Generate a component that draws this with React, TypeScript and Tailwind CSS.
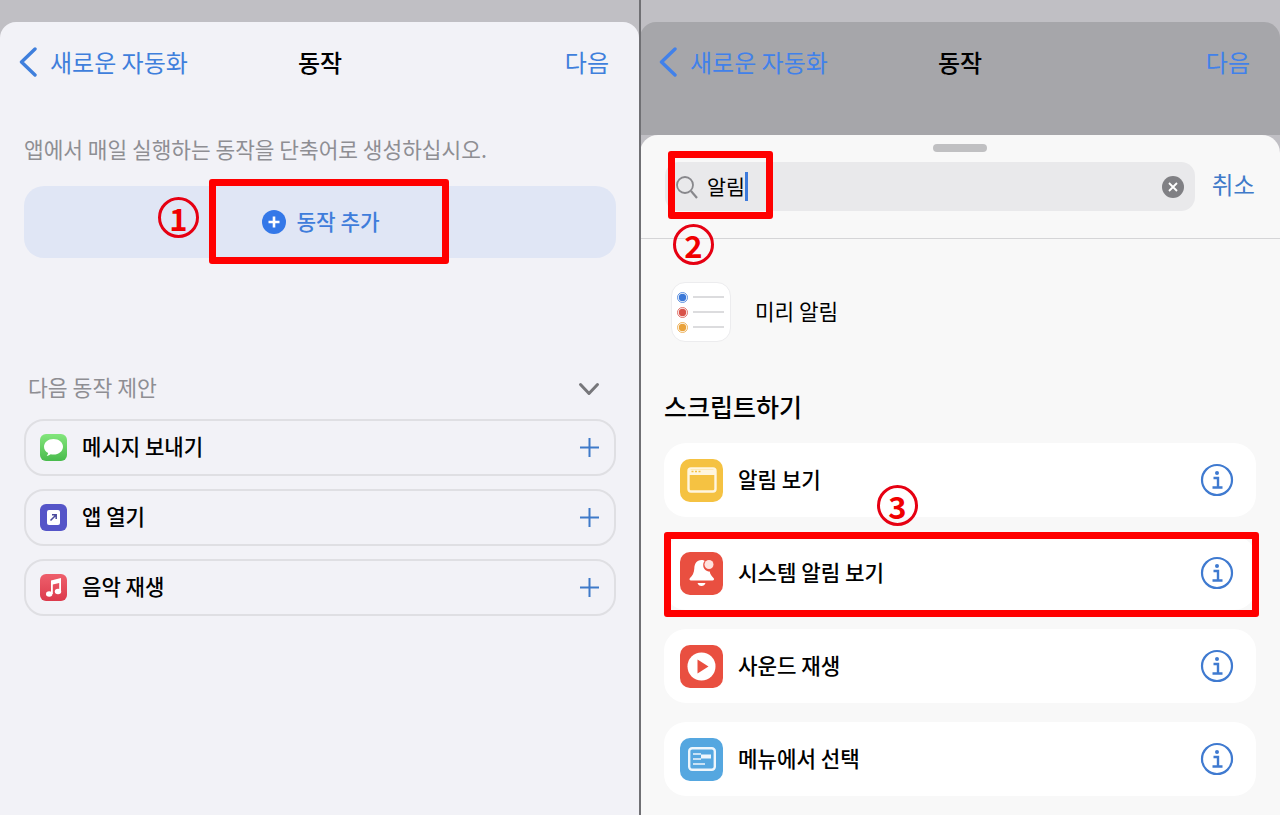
const font = { fontFamily: '"Noto Sans CJK KR", "Noto Sans", sans-serif' }

function Back({ color = '#3f7ddb' }: { color?: string }) {
  return (
    <svg width="18" height="30" viewBox="0 0 18 30" fill="none">
      <path d="M16 2 2.500 15 16 28" stroke={color} strokeWidth="3.400" strokeLinecap="round" strokeLinejoin="round" />
    </svg>
  )
}

function NavBar({ blue }: { blue: string }) {
  return (
    <div className="relative flex h-[80px] items-center justify-between pr-[30px] pl-[19px]">
      <div className="flex items-center gap-[13px]">
        <Back color={blue} />
        <span className="text-[24px] leading-8" style={{ color: blue }}>새로운 자동화</span>
      </div>
      <span className="absolute left-[298px] text-[24px] leading-8 font-medium text-black">동작</span>
      <span className="text-[24px] leading-8" style={{ color: blue }}>다음</span>
    </div>
  )
}

function AppIcon({ children, className }: { children: React.ReactNode; className: string }) {
  return <div className={`flex h-[27px] w-[27px] items-center justify-center rounded-[6px] ${className}`}>{children}</div>
}

function Suggestion({ icon, label }: { icon: React.ReactNode; label: string }) {
  return (
    <div className="flex h-[57px] items-center rounded-[20px] border-2 border-[#dfdfe3] pr-[15px] pl-[14px]">
      {icon}
      <span className="ml-[15px] flex-1 pb-1 text-[21.100px] leading-7 font-medium text-black">{label}</span>
      <svg width="19" height="19" viewBox="0 0 19 19" stroke="#3f7ac9" strokeWidth="2"><path d="M9.500 0v19M0 9.500h19" /></svg>
    </div>
  )
}

function Info() {
  return (
    <svg width="34" height="34" viewBox="0 0 34 34" fill="none">
      <circle cx="17" cy="17" r="15" stroke="#3f7ad0" strokeWidth="2.200" />
      <circle cx="17" cy="10" r="2" fill="#3f7ad0" />
      <path d="M13.500 15H18v9M12.500 24.500h10" stroke="#3f7ad0" strokeWidth="2.400" />
    </svg>
  )
}

function ActionRow({ icon, label, className }: { icon: React.ReactNode; label: string; className: string }) {
  return (
    <div className="flex h-[74px] items-center rounded-[22px] bg-white pr-[22px] pl-4">
      <div className={`flex h-[43px] w-[43px] items-center justify-center rounded-[10px] ${className}`}>{icon}</div>
      <span className="ml-[15px] flex-1 pb-[2px] text-[21.200px] leading-7 font-medium text-black">{label}</span>
      <Info />
    </div>
  )
}

function RedBox({ className }: { className: string }) {
  return <div className={`absolute rounded-[3px] border-[7px] border-[#ff0000] ${className}`} />
}

function Mark({ children, className }: { children: string; className: string }) {
  return (
    <div className={`absolute flex h-[41px] w-[41px] items-center justify-center rounded-full border-[3px] border-[#e60012] text-[31px] leading-none font-bold text-[#f00000] ${className}`}>
      {children}
    </div>
  )
}

export default function App() {
  return (
    <div className="relative flex h-[815px] w-[1280px] overflow-hidden bg-[#c0bfc4]" style={font}>
      {/* left phone */}
      <div className="w-[639px] pt-[22px]">
        <div className="h-[793px] rounded-t-[16px] bg-[#f2f2f7]">
          <NavBar blue="#3f7fdc" />
          <div className="pr-[23px] pl-6">
            <p className="mt-[33px] text-[21.400px] leading-7 text-[#8e8e93]">앱에서 매일 실행하는 동작을 단축어로 생성하십시오.</p>
            <div className="mt-[23px] flex h-[72px] items-center justify-center gap-[10px] rounded-[20px] bg-[#e0e6f5] pl-[2px]">
              <svg width="24" height="24" viewBox="0 0 24 24">
                <circle cx="12" cy="12" r="12" fill="#3478e8" />
                <path d="M12 6.500v11M6.500 12h11" stroke="#fff" strokeWidth="2.600" />
              </svg>
              <span className="pb-[3px] text-[21.300px] leading-7 font-medium text-[#3f7ddb]">동작 추가</span>
            </div>
            <div className="mt-[114px] flex h-[30px] items-center justify-between pr-[16px] pl-1">
              <span className="text-[21.600px] leading-7 text-[#8e8e93]">다음 동작 제안</span>
              <svg className="mt-1" width="22" height="14" viewBox="0 0 22 14" fill="none">
                <path d="M2.500 2.500l8.500 9 8.500-9" stroke="#77777b" strokeWidth="3" strokeLinecap="round" strokeLinejoin="round" />
              </svg>
            </div>
            <div className="mt-[17px] flex flex-col gap-[13px]">
              <Suggestion
                label="메시지 보내기"
                icon={
                  <AppIcon className="bg-gradient-to-b from-[#83e67c] to-[#48bb4c]">
                    <svg width="21" height="20" viewBox="0 0 21 20">
                      <path d="M10.500 1C5.200 1 1 4.400 1 8.700c0 2.700 1.700 5 4.200 6.400-.2 1-.8 1.900-1.500 2.600 1.600 0 3-.6 4-1.500.9.2 1.800.3 2.800.3 5.300 0 9.500-3.400 9.500-7.800S15.800 1 10.500 1z" fill="#fff" />
                    </svg>
                  </AppIcon>
                }
              />
              <Suggestion
                label="앱 열기"
                icon={
                  <AppIcon className="bg-[#5555c8]">
                    <div className="flex h-[15px] w-[13px] items-center justify-center rounded-[2px] bg-white">
                      <svg width="9" height="9" viewBox="0 0 9 9" fill="none" stroke="#4a4a9c" strokeWidth="1.500"><path d="M1.500 7.500 7 2M3 1.800h4.200V6" /></svg>
                    </div>
                  </AppIcon>
                }
              />
              <Suggestion
                label="음악 재생"
                icon={
                  <AppIcon className="bg-gradient-to-b from-[#ee5f6c] to-[#dc3a4c]">
                    <svg width="18" height="21" viewBox="0 0 18 21" fill="#fff">
                      <path d="M6 3.500 16 1v13.500h-1.800V6L7.800 7.500V17H6z" />
                      <ellipse cx="4.200" cy="17" rx="3.200" ry="2.800" />
                      <ellipse cx="13" cy="14.500" rx="3.200" ry="2.800" />
                    </svg>
                  </AppIcon>
                }
              />
            </div>
          </div>
        </div>
      </div>

      <div className="relative z-10 -mr-px w-[2px] bg-[#707074]" />

      {/* right phone */}
      <div className="flex w-[640px] flex-col pt-[22px]">
        <div className="h-[113px] rounded-t-[16px] bg-[#a6a6aa]">
          <NavBar blue="#4181ea" />
        </div>
        <div className="flex-1 rounded-t-[18px] bg-[#f8f8f8]">
          <div className="mx-auto mt-[9px] h-2 w-[54px] rounded-full bg-[#c0c0c2]" />
          <div className="flex items-center pr-[25px] pl-[25px] pt-[10px]">
            <div className="flex h-[49px] w-[530px] items-center rounded-[14px] bg-[#e9e9eb] pr-[11px] pl-[10px]">
              <svg width="24" height="24" viewBox="0 0 24 24" fill="none" stroke="#88888c" strokeWidth="1.800">
                <circle cx="10" cy="10" r="8" />
                <path d="m16 16 6 7" strokeWidth="2.200" />
              </svg>
              <span className="ml-[8px] pb-[2px] text-[20.600px] leading-7 text-black">알림</span>
              <div className="h-[29px] w-[3px] bg-[#3d7bdc]" />
              <div className="flex-1" />
              <div className="flex h-[22px] w-[22px] items-center justify-center rounded-full bg-[#808084]">
                <svg width="10" height="10" viewBox="0 0 10 10" stroke="#fff" strokeWidth="1.800"><path d="m1 1 8 8M9 1 1 9" /></svg>
              </div>
            </div>
            <span className="ml-[17px] -translate-y-[3px] text-[23.500px] leading-7 whitespace-nowrap text-[#3f7ac9]">취소</span>
          </div>
          <div className="mt-[27px] h-px bg-[#d5d5d7]" />
          <div className="mt-[43px] flex items-center pl-[31px]">
            <div className="flex h-[60px] w-[60px] flex-col justify-center gap-1 rounded-[14px] border border-[#ececee] bg-white pr-[6px] pl-[5px]">
              {['#3b78d8', '#d9534a', '#e9a23b'].map(c => (
                <div key={c} className="flex items-center gap-[5px]">
                  <svg width="11" height="11" viewBox="0 0 11 11">
                    <circle cx="5.500" cy="5.500" r="5" fill="none" stroke={c} strokeWidth="0.800" />
                    <circle cx="5.500" cy="5.500" r="3.700" fill={c} />
                  </svg>
                  <div className="h-[2px] flex-1 bg-[#dcdcde]" />
                </div>
              ))}
            </div>
            <span className="ml-[24px] pb-[2px] text-[21.300px] leading-7 text-black">미리 알림</span>
          </div>
          <h2 className="mt-[48px] pl-6 text-[25px] leading-8 font-medium text-black">스크립트하기</h2>
          <div className="mt-[21px] flex flex-col gap-[19px] pr-6 pl-6">
            <ActionRow
              label="알림 보기"
              className="bg-[#f5c242]"
              icon={
                <svg width="30" height="26" viewBox="0 0 30 26" fill="none">
                  <rect x="1.500" y="1.500" width="27" height="23" rx="2.500" stroke="#fff6e0" strokeWidth="2.400" />
                  <path d="M1.500 5.500h27" stroke="#fff6e0" strokeWidth="5" />
                  <path d="M4.500 4.500h2M8 4.500h2M11.500 4.500h2" stroke="#f5c242" strokeWidth="1.500" />
                </svg>
              }
            />
            <ActionRow
              label="시스템 알림 보기"
              className="bg-[#e94f40]"
              icon={
                <svg width="30" height="32" viewBox="0 0 30 32">
                  <path d="M14.500 3C9.500 3 7.500 7 7.300 11.500c-.2 4.500-2 7.500-4.300 9.500-1 1-.5 2.500 1 2.500h21.500c1.500 0 2-1.500 1-2.500-2-1.800-3.300-3.800-3.800-6.500-3.500 0-6.500-2.500-6.500-6.500 0-1.800.5-3 1.500-4C17 3.300 16 3 14.500 3z" fill="#fff" />
                  <path d="M10.500 26a4.200 4.200 0 0 0 8 0z" fill="#fff" />
                  <circle cx="22" cy="7.500" r="4.500" fill="#ffe3df" />
                </svg>
              }
            />
            <ActionRow
              label="사운드 재생"
              className="bg-[#e94f40]"
              icon={
                <svg width="29" height="29" viewBox="0 0 29 29">
                  <circle cx="14.500" cy="14.500" r="14" fill="#fff" />
                  <path d="M10.500 7.500v14l11-7z" fill="#e94f40" />
                </svg>
              }
            />
            <ActionRow
              label="메뉴에서 선택"
              className="bg-[#55a7e0]"
              icon={
                <svg width="28" height="24" viewBox="0 0 28 24" fill="none">
                  <rect x="1.200" y="1.200" width="25.600" height="21.600" rx="3" stroke="#eef6fc" strokeWidth="2.400" />
                  <path d="M13 9.500h10" stroke="#eef6fc" strokeWidth="4" />
                  <path d="M5 7h8M5 12h8M5 17h12" stroke="#eef6fc" strokeWidth="1.500" />
                </svg>
              }
            />
          </div>
        </div>
      </div>

      {/* red annotations */}
      <RedBox className="top-[179px] left-[209px] h-[85px] w-[240px]" />
      <Mark className="top-[197px] left-[158px]">1</Mark>
      <RedBox className="top-[151px] left-[668px] h-[68px] w-[105px]" />
      <Mark className="top-[224px] left-[673px]">2</Mark>
      <RedBox className="top-[532px] left-[664px] h-[85px] w-[595px]" />
      <Mark className="top-[485px] left-[877px]">3</Mark>
    </div>
  )
}
